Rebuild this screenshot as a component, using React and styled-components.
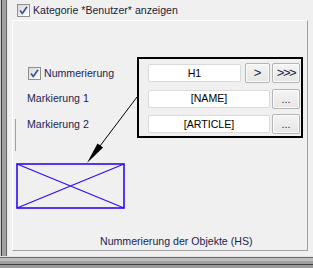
import React from "react";
import styled, { createGlobalStyle } from "styled-components";

const GlobalStyle = createGlobalStyle`
  html, body {
    margin: 0;
    padding: 0;
    background: #f0f0f0;
  }
  body {
    font-family: "Liberation Sans", Arial, sans-serif;
    font-size: 10.6px;
  }
`;

const Frame = styled.div`
  width: 313px;
  height: 268px;
  box-sizing: border-box;
  padding: 0 0 12px 8px;
  background: #f0f0f0;
  overflow: hidden;
  box-shadow:
    inset 0 -3px 0 #9a9a9a,
    inset 0 -4px 0 #3e3e3e,
    inset 0 -7px 0 #a0a0a0,
    inset 0 -10px 0 #bdbdbd,
    inset 0 -11px 0 #6a6a6a,
    inset 0 -12px 0 #e4e4e4,
    inset 1px 0 0 #c8c8c8,
    inset 2px 0 0 #3e3e3e,
    inset 6px 0 0 #a0a0a0,
    inset 7px 0 0 #6a6a6a,
    inset 8px 0 0 #e4e4e4;
`;

const Header = styled.div`
  height: 20px;
  box-sizing: border-box;
  padding: 4px 0 0 9px;
`;

const CheckRow = styled.label`
  display: flex;
  align-items: center;
  gap: 3px;
  margin-left: ${(p) => p.$indent || 0}px;
`;

const Box13 = styled.span`
  width: 13px;
  height: 13px;
  box-sizing: border-box;
  border: 1px solid #8e8f8f;
  background: linear-gradient(135deg, #d8d8d8 0%, #f4f4f4 70%, #ffffff 100%);
  display: flex;
  align-items: center;
  justify-content: center;
  flex-shrink: 0;

  svg {
    display: block;
  }
`;

const Label = styled.span`
  color: ${(p) => p.$color || "#1c2450"};
  line-height: 13px;
  white-space: nowrap;
`;

const Panel = styled.div`
  position: relative;
  margin-left: 4px;
  width: 296px;
  height: 231px;
  box-sizing: border-box;
  border-top: 1px solid #ffffff;
  border-left: 1px solid #ffffff;
  border-right: 1px solid #a0a0a0;
  border-bottom: 1px solid #a0a0a0;
`;

const TopSection = styled.div`
  display: flex;
  height: 81px;
  margin-top: 36px;
`;

const LeftCol = styled.div`
  display: flex;
  width: 124px;
  flex-shrink: 0;
`;

const Rail = styled.div`
  width: 1px;
  height: 32px;
  margin: 62px 0 0 2px;
  background: #a0a0a0;
  flex-shrink: 0;
`;

const Labels = styled.div`
  display: grid;
  grid-auto-rows: 20px;
  row-gap: 5.5px;
  align-content: start;
  padding-top: 6px;
  margin-left: 11px;
`;

const LabelCell = styled.div`
  display: flex;
  align-items: center;
`;

const Callout = styled.div`
  width: 166px;
  height: 81px;
  box-sizing: border-box;
  border: 2px solid #000;
  padding: 4px 1px 0 9px;
  display: grid;
  grid-auto-rows: 20px;
  row-gap: 5.5px;
  align-content: start;
`;

const Row = styled.div`
  display: flex;
  align-items: center;
  gap: 2px;
`;

const Field = styled.div`
  flex: 1;
  height: 18px;
  box-sizing: border-box;
  margin-right: ${(p) => p.$space || 0}px;
  background: #ffffff;
  border: 1px solid #dadada;
  border-radius: 2px;
  display: flex;
  align-items: center;
  justify-content: center;
  color: #000;
  line-height: 13px;
`;

const Button = styled.div`
  width: ${(p) => p.$w}px;
  height: 20px;
  box-sizing: border-box;
  flex-shrink: 0;
  border: 1px solid #b4b4b4;
  border-radius: 2px;
  background: linear-gradient(#f4f4f4, #e6e6e6);
  box-shadow: inset 0 0 0 1px #fbfbfb;
  display: flex;
  align-items: ${(p) => (p.$dots ? "flex-end" : "center")};
  justify-content: center;
  padding-bottom: ${(p) => (p.$dots ? 3 : 1)}px;
  color: #1a1a3a;
  font-size: ${(p) => (p.$dots ? 10.6 : 13)}px;
  line-height: 11px;
  letter-spacing: ${(p) => (p.$tight ? "-1.5px" : "0")};
`;

const Crossed = styled.svg`
  display: block;
  margin: 25px 0 0 3px;
`;

const Caption = styled.div`
  margin-top: 26px;
  padding-left: 87px;
  line-height: 13px;
  color: #1c2450;
  white-space: nowrap;
`;

const Overlay = styled.svg`
  position: absolute;
  left: -1px;
  top: -1px;
  pointer-events: none;
`;

const Check = () => (
  <Box13>
    <svg width="11" height="11" viewBox="0 0 11 11">
      <path
        d="M2 5.5 L4.3 8.5 L9 1.8"
        fill="none"
        stroke="#3a5590"
        strokeWidth="1.7"
        strokeLinejoin="round"
      />
    </svg>
  </Box13>
);

const App = () => {
  return (
    <>
      <GlobalStyle />
      <Frame>
        <Header>
          <CheckRow>
            <Check />
            <Label $color="#20243a">Kategorie *Benutzer* anzeigen</Label>
          </CheckRow>
        </Header>
        <Panel>
          <TopSection>
            <LeftCol>
              <Rail />
              <Labels>
                <LabelCell>
                  <CheckRow $indent={1}>
                    <Check />
                    <Label>Nummerierung</Label>
                  </CheckRow>
                </LabelCell>
                <LabelCell>
                  <Label>Markierung 1</Label>
                </LabelCell>
                <LabelCell>
                  <Label>Markierung 2</Label>
                </LabelCell>
              </Labels>
            </LeftCol>
            <Callout>
              <Row>
                <Field $space={2}>H1</Field>
                <Button $w={25}>&gt;</Button>
                <Button $w={28} $tight>&gt;&gt;&gt;</Button>
              </Row>
              <Row>
                <Field>[NAME]</Field>
                <Button $w={28} $dots>...</Button>
              </Row>
              <Row>
                <Field>[ARTICLE]</Field>
                <Button $w={28} $dots>...</Button>
              </Row>
            </Callout>
          </TopSection>
          <Crossed width="109" height="46" viewBox="0 0 109 46">
            <rect x="1" y="1" width="107" height="44" fill="none" stroke="#3308f2" strokeWidth="1.6" />
            <path d="M1 1 L108 45 M1 45 L108 1" stroke="#3308f2" strokeWidth="1.1" />
          </Crossed>
          <Caption>Nummerierung der Objekte (HS)</Caption>
          <Overlay width="296" height="231" viewBox="0 0 296 231">
            <line x1="125" y1="77" x2="88" y2="126" stroke="#000" strokeWidth="1" />
            <polygon points="75,143 91.1,127.6 85.5,123.4" fill="#000" />
          </Overlay>
        </Panel>
      </Frame>
    </>
  );
};

export default App;
